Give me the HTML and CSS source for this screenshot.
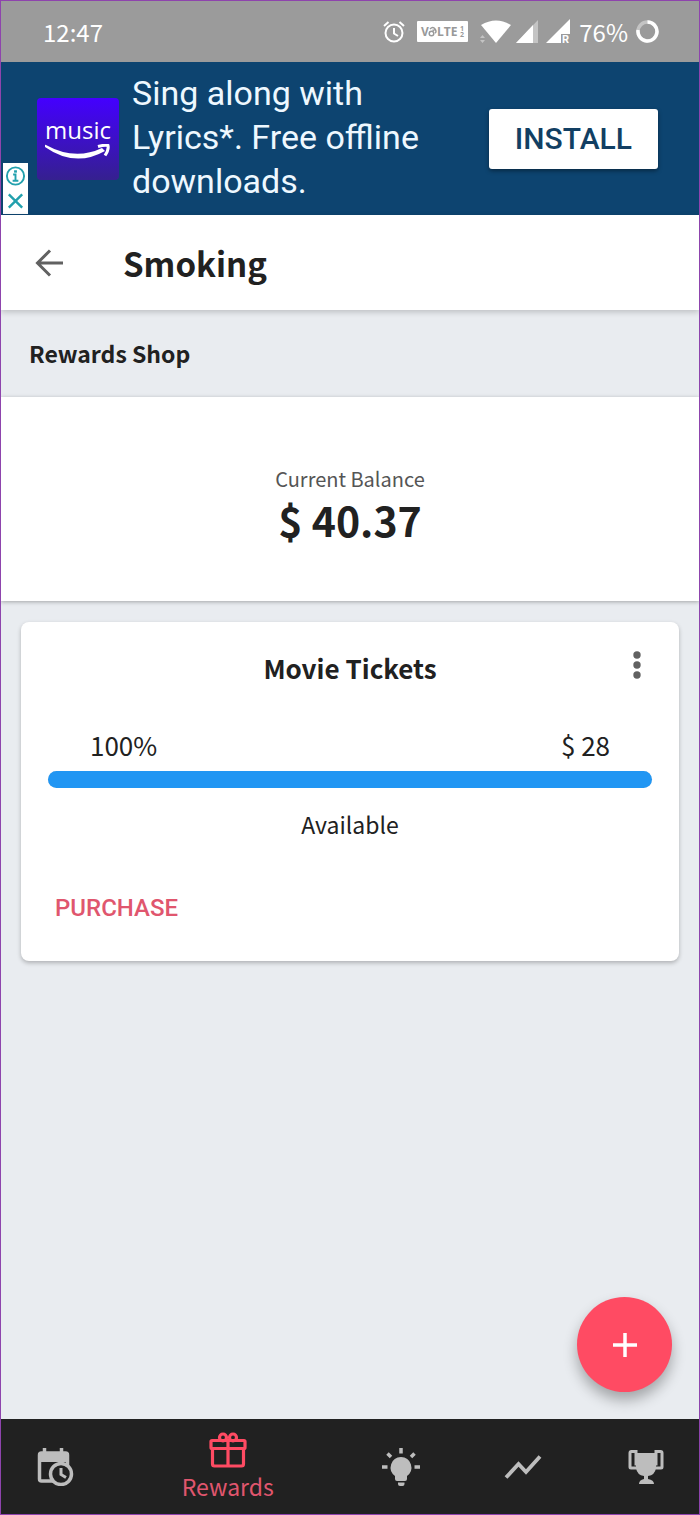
FILE: index.html
```
<!DOCTYPE html>
<html lang="en">

<head>
  <meta charset="UTF-8">
  <meta name="viewport" content="width=device-width, initial-scale=1.0">
  <title>Smoking - Rewards Shop</title>

  <link rel="stylesheet" href="styles.css">
</head>

<body>

  <div class="status-bar">
    <span class="time">12:47</span>
    <div class="status-icons">
      <svg class="alarm" width="22" height="22" viewBox="0 0 22 22" fill="none" stroke="#fff" stroke-width="2">
        <circle cx="11" cy="12" r="8.5" />
        <path d="M11 7v5.5l4 2.5M1 5l4.5-4M21 5l-4.5-4" />
      </svg>
      <svg class="volte" width="51" height="21" viewBox="0 0 51 21">
        <rect width="51" height="21" rx="1" fill="#fff" />
        <g fill="#999" font-family="Open Sans, sans-serif" font-weight="700">
          <text x="4" y="15" font-size="12">V</text>
          <text x="20" y="15" font-size="12">LTE</text>
          <text x="43" y="10" font-size="7">1</text>
          <text x="43" y="16" font-size="7">2</text>
        </g>
        <g fill="none" stroke="#999" stroke-width="1.5">
          <circle cx="14.500" cy="12.500" r="2.300" />
          <path d="M13 8q3-3 5 0t0 4M15.500 9.500l2.500-1" />
        </g>
      </svg>
      <svg class="wifi" width="32" height="24" viewBox="0 0 32 24">
        <path fill="#fff" d="M1 5Q16-4 31 5L16 23z" />
        <path fill="#c4c4c4" d="M0 18l2.500-3L5 18zM0 20h5l-2.500 3z" />
      </svg>
      <svg class="signal" width="22" height="23" viewBox="0 0 22 23">
        <path fill="#c4c4c4" d="M22 0v23H0z" />
        <path fill="#fff" d="M17 5v18H0z" />
      </svg>
      <svg width="25" height="26" viewBox="0 0 25 26">
        <path fill="#fff" d="M24 0v15h-9v9H0z" />
        <text x="16" y="24" font-size="11" font-weight="700" font-family="Roboto, sans-serif" fill="#fff">R</text>
      </svg>
      <span class="battery">76%</span>
      <svg width="23" height="23" viewBox="0 0 23 23" fill="none" stroke-width="3.500">
        <circle cx="11.500" cy="11.500" r="9.500" stroke="#c4c4c4" />
        <path d="M11.500 2a9.500 9.500 0 1 1-9.400 8" stroke="#fff" />
      </svg>
    </div>
  </div>

  <div class="ad">
    <div class="ad-badge">
      <button aria-label="Ad info">
        <svg width="21" height="22" viewBox="0 0 22 22" fill="none" stroke="#22a0ad" stroke-width="2">
          <circle cx="11" cy="11" r="9" />
          <path d="M8.500 9.500H11v6M8 16h6" />
          <path d="M11 5v2.500" stroke-width="3" />
        </svg>
      </button>
      <button aria-label="Close ad">
        <svg width="21" height="22" viewBox="0 0 22 22" stroke="#22a0ad" stroke-width="2.500">
          <path d="M4 4l14 14M18 4L4 18" />
        </svg>
      </button>
    </div>
    <div class="ad-logo">
      <span>music</span>
      <svg width="66" height="18" viewBox="0 0 66 18">
        <path fill="#fff" d="M1 1Q30 17 57 4l3 3Q30 24 0 3q-1-3 1-2z" />
        <path fill="none" stroke="#fff" stroke-width="3" d="M53 2.500q7-2 10-1 1 4-3 10" />
      </svg>
    </div>
    <p class="ad-text">Sing along with Lyrics*. Free offline downloads.</p>
    <button class="install">INSTALL</button>
  </div>

  <header class="header">
    <button class="back" aria-label="Back">
      <svg width="28" height="28" viewBox="0 0 28 28" fill="none" stroke="#616161" stroke-width="3">
        <path d="M28 14H3M15 1.500L2.500 14 15 26.500" />
      </svg>
    </button>
    <h1>Smoking</h1>
  </header>

  <main class="main">
    <h2 class="section-title">Rewards Shop</h2>

    <div class="balance">
      <div class="balance-label">Current Balance</div>
      <div class="balance-amount">$ 40.37</div>
    </div>

    <div class="card">
      <div class="card-top">
        <h3>Movie Tickets</h3>
        <button class="more" aria-label="More options">
          <svg width="8" height="28" viewBox="0 0 8 28" fill="#616161">
            <circle cx="4" cy="4" r="3.700" />
            <circle cx="4" cy="14" r="3.700" />
            <circle cx="4" cy="24" r="3.700" />
          </svg>
        </button>
      </div>
      <div class="card-values">
        <span>100%</span>
        <span>$ 28</span>
      </div>
      <div class="progress">
        <div class="progress-fill" style="width: 100%"></div>
      </div>
      <div class="card-status">Available</div>
      <button class="purchase">PURCHASE</button>
    </div>

    <button class="add" aria-label="Add reward">
      <svg width="24" height="24" viewBox="0 0 24 24" stroke="#fff" stroke-width="3.500">
        <path d="M12 0v24M0 12h24" />
      </svg>
    </button>
  </main>

  <nav class="nav">
    <a href="#" aria-label="Schedule">
      <svg width="38" height="38" viewBox="0 0 38 38" fill="none" stroke="#bdbdbd">
        <path d="M3 5h29v9H3z" fill="#bdbdbd" stroke="none" />
        <path d="M8.500 0v7M25.500 0v7" stroke-width="3.500" />
        <path d="M17 33H5.500q-2 0-2-2V7q0-2 2-2h24q2 0 2 2v10" stroke-width="3.500" />
        <circle cx="25" cy="26" r="10.500" fill="#212121" stroke-width="3.500" />
        <path d="M25 20v6.500l5 3" stroke-width="3" />
      </svg>
    </a>
    <a href="#" class="active">
      <svg width="38" height="36" viewBox="0 0 38 36" fill="none" stroke="#ff4b63" stroke-width="3.200">
        <rect x="2" y="8.500" width="34" height="8" rx="1" />
        <path d="M3.500 16.500V32q0 2 2 2h27q2 0 2-2V16.500M19 8v26" />
        <circle cx="14" cy="5.500" r="3.500" />
        <circle cx="24" cy="5.500" r="3.500" />
      </svg>
      <span>Rewards</span>
    </a>
    <a href="#" aria-label="Tips">
      <svg width="38" height="38" viewBox="0 0 38 38" fill="#bdbdbd">
        <path d="M19 9a10.500 10.500 0 0 1 6 19v3q0 2-2 2h-8q-2 0-2-2v-3a10.500 10.500 0 0 1 6-19zM16 34.500h6.500V36q0 2-2 2H18q-2 0-2-2z" />
        <path d="M19 0v5.500M0 19h5.500M32.500 19H38M5.500 5.500l3.500 3.500M32.500 5.500L29 9" stroke="#bdbdbd" stroke-width="3.500" />
      </svg>
    </a>
    <a href="#" aria-label="Statistics">
      <svg width="38" height="38" viewBox="0 0 38 38" fill="none" stroke="#bdbdbd" stroke-width="3.800">
        <path d="M2 29.500l12.500-13.500 7.500 8L36 8.500" />
      </svg>
    </a>
    <a href="#" aria-label="Trophies">
      <svg width="38" height="38" viewBox="0 0 38 38" fill="#bdbdbd">
        <path d="M9 5h20v15q-1 7-8 8v3q6 1 6 5H12q0-4 5-5v-3q-7-1-8-8z" />
        <path d="M10 20H4q-1 0-1-1V5q0-1.500 1.500-1.500H9v14M28 20h6q1 0 1-1V5q0-1.500-1.500-1.500H29v14" fill="none" stroke="#bdbdbd" stroke-width="3" />
      </svg>
    </a>
  </nav>

</body>

</html>
```

FILE: styles.css
```
* {
  box-sizing: border-box;
}

body {
  margin: 0;
  min-height: 100vh;
  display: flex;
  flex-direction: column;
  border: 1px solid #8e44ad;
  background-color: #e9ecf0;
  color: #212121;
  font-family: "Noto Sans CJK SC", "Noto Sans", sans-serif;
}

h1,
h2,
h3,
p {
  margin: 0;
}

button {
  padding: 0;
  border: none;
  background: none;
  cursor: pointer;
}

svg {
  display: block;
}

.status-bar {
  display: flex;
  justify-content: space-between;
  align-items: center;
  height: 61px;
  padding: 0 40px 0 42px;
  background-color: #9b9b9b;
  color: white;
  font-size: 24px;
  line-height: 32px;
}

.status-icons {
  display: flex;
  align-items: center;
  gap: 8px;
}

.alarm {
  margin-right: 4px;
}

.volte {
  margin-right: 4px;
}

.wifi {
  margin-right: -4px;
}

.ad {
  position: relative;
  display: flex;
  align-items: center;
  height: 153px;
  padding: 0 41px 0 36px;
  background-color: #0d4470;
}

.ad-badge {
  position: absolute;
  left: 2px;
  bottom: 1px;
  display: grid;
  gap: 3px;
  padding: 2px;
  background-color: white;
}

.ad-logo {
  display: flex;
  flex-direction: column;
  align-items: center;
  width: 82px;
  height: 82px;
  padding-top: 18px;
  border-radius: 4px;
  background: linear-gradient(#4400ff, #35208f);
  color: white;
  font-family: "Open Sans", sans-serif;
  font-size: 24px;
  line-height: 28px;
}

.ad-text {
  width: 300px;
  margin-left: 13px;
  padding-bottom: 3px;
  color: #eef8ff;
  font-family: Roboto, sans-serif;
  font-size: 34px;
  line-height: 44px;
}

.install {
  height: 60px;
  margin-left: auto;
  padding: 0 26px;
  border-radius: 3px;
  background-color: white;
  box-shadow: 0 2px 4px rgba(0, 0, 0, 0.4);
  color: #123f63;
  font-family: Roboto, sans-serif;
  font-size: 30px;
  font-weight: 500;
}

.header {
  position: relative;
  display: flex;
  align-items: center;
  gap: 60px;
  height: 95px;
  padding: 0 34px;
  background-color: white;
  box-shadow: 0 2px 6px rgba(0, 0, 0, 0.2);
}

.header h1 {
  font-size: 33px;
  line-height: 44px;
}

.main {
  position: relative;
  flex: 1;
}

.section-title {
  padding: 28px;
  font-size: 23px;
  line-height: 31px;
}

.balance {
  padding: 67px 0 57px;
  background-color: white;
  box-shadow: 0 1px 4px rgba(0, 0, 0, 0.3);
  text-align: center;
}

.balance-label {
  color: #555;
  font-size: 20px;
  line-height: 30px;
}

.balance-amount {
  font-size: 41px;
  font-weight: 700;
  line-height: 50px;
}

.card {
  margin: 21px 20px;
  padding: 25px 27px 32px;
  border-radius: 8px;
  background-color: white;
  box-shadow: 0 2px 4px rgba(0, 0, 0, 0.25);
}

.card-top {
  position: relative;
  text-align: center;
}

.card-top h3 {
  font-size: 26px;
  line-height: 42px;
}

.more {
  position: absolute;
  top: 4px;
  right: 11px;
}

.card-values {
  display: flex;
  justify-content: space-between;
  padding: 38px 42px 8px;
  font-size: 26px;
  line-height: 36px;
}

.progress {
  height: 17px;
  border-radius: 9px;
  background-color: #dddddd;
}

.progress-fill {
  height: 100%;
  border-radius: 9px;
  background-color: #2196f3;
}

.card-status {
  padding: 18px 0 45px;
  font-size: 23px;
  line-height: 36px;
  text-align: center;
}

.purchase {
  display: block;
  margin-left: 7px;
  color: #e0566e;
  font-family: Roboto, sans-serif;
  font-size: 24px;
  font-weight: 500;
  line-height: 42px;
}

.add {
  position: absolute;
  right: 27px;
  bottom: 27px;
  display: flex;
  align-items: center;
  justify-content: center;
  width: 95px;
  height: 95px;
  border-radius: 50%;
  background-color: #ff4b63;
  box-shadow: 0 8px 14px rgba(0, 0, 0, 0.3);
}

.nav {
  display: flex;
  justify-content: space-between;
  align-items: center;
  height: 95px;
  padding: 0 34px 0 35px;
  background-color: #212121;
}

.nav a {
  text-decoration: none;
}

.nav .active {
  display: flex;
  flex-direction: column;
  align-items: center;
  gap: 2px;
  padding: 0 23px;
  color: #e0566e;
  font-size: 23px;
  line-height: 32px;
}
```
